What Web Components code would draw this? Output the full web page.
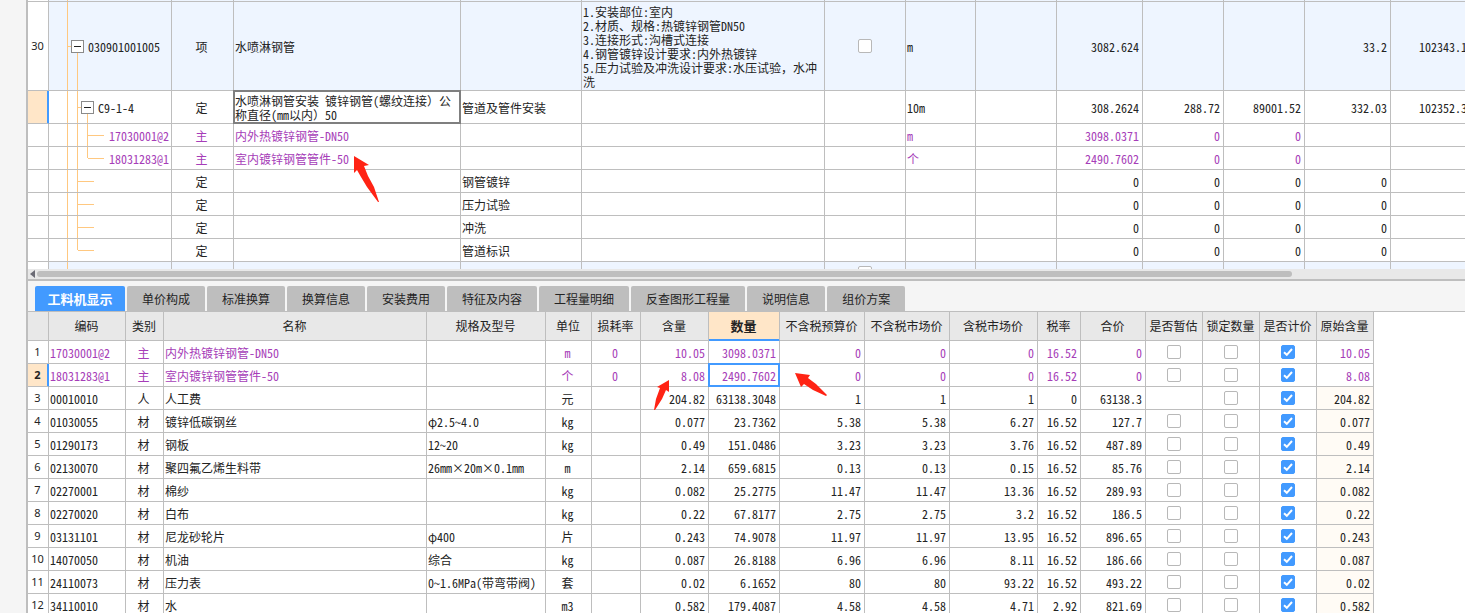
<!DOCTYPE html>
<html lang="zh-CN">
<head>
<meta charset="utf-8">
<title>工料机显示</title>
<style>
html, body { height: 100%; margin: 0; }
body {
  background: #f5f5f5; color: #232323; overflow: hidden;
  font: 12px/14px "Noto Sans CJK SC", sans-serif;
  font-feature-settings: "hwid" 1;
  --line: #bebebe; --blue: #429aff; --purple: #a63db8; --peach: #ffe6c8; --tree: #ffc880;
}
</style>
</head>
<body>
<cost-page></cost-page>
<script>
const tpl = html => { const t = document.createElement('template'); t.innerHTML = html; return t; };
const mount = (el, html) => {
  const root = el.attachShadow({ mode: 'open' });
  root.append(tpl(html).content.cloneNode(true));
  return root;
};
/* Chinese punctuation keeps its full width; letters and digits are half width. */
const wide = s => s.replace(/[，）]/g, '<span class="fw">$&</span>');

/* Rules shared by both grids. */
const gridCss = `
  table { border-collapse: separate; border-spacing: 0; table-layout: fixed; background: #fff; }
  td, th { box-sizing: border-box; padding: 2px 3px 0 1px; font-weight: 400; text-align: left;
    border-right: 1px solid var(--line); border-bottom: 1px solid var(--line);
    vertical-align: middle; overflow: hidden; position: relative; height: 23px; }
  tr.mat { color: var(--purple); }
  td.c { text-align: center; }
  td.r { text-align: right; white-space: nowrap; }
  th.no { padding: 0 1px 0 0; text-align: center; color: #232323; font: 11px/14px "Noto Sans", sans-serif; background: #fff; }
  th.no.on { background: var(--peach); font-weight: 700; box-shadow: inset -1px 0 var(--blue); border-right-color: var(--blue); }
  td.sel { overflow: visible; }
  td.sel::after { content: ""; position: absolute; inset: -1px; border: 2px solid var(--ring); pointer-events: none; }
  td.k { padding: 0; text-align: center; }
  .fw { font-feature-settings: normal; }
`;

/* A small tick box. */
customElements.define('tick-box', class extends HTMLElement {
  constructor() {
    super();
    const root = mount(this, `<style>
      :host { display: flex; justify-content: center; }
      input { appearance: none; box-sizing: border-box; width: 14px; height: 14px; margin: 0;
        border: 1px solid #b8b8b8; border-radius: 2px; background: #fff; }
      input:checked { border-color: var(--blue); background: var(--blue)
        url("data:image/svg+xml,%3Csvg xmlns='http://www.w3.org/2000/svg' viewBox='0 0 12 12'%3E%3Cpath d='M2 6.2l2.8 2.6L10 3' fill='none' stroke='white' stroke-width='2'/%3E%3C/svg%3E") center / 12px; }
    </style><input type="checkbox">`);
    const box = root.querySelector('input');
    box.checked = this.hasAttribute('checked');
    box.setAttribute('aria-label', this.getAttribute('label') || '');
  }
});

/* Connector lines, fold button and the slotted code of one tree row. */
customElements.define('tree-node', class extends HTMLElement {
  constructor() {
    super();
    const fold = this.hasAttribute('fold');
    const lines = (this.getAttribute('lines') || '').split(' ').filter(Boolean).map(s => {
      const [kind, x] = s.split(':');
      const y = { full: ['0', '100%'], upper: ['0', '50%'], lower: ['50%', '100%'] }[kind];
      return y ? `<line x1="${x}" x2="${x}" y1="${y[0]}" y2="${y[1]}"/>`
               : `<line x1="${x}" x2="${+x + 16}" y1="50%" y2="50%"/>`;
    }).join('');
    mount(this, `<style>
      :host { display: flex; align-items: center; gap: 4px; white-space: nowrap; }
      svg { position: absolute; inset: 0; width: 100%; height: 100%; }
      line { stroke: var(--tree); stroke-width: 1; shape-rendering: crispEdges; }
      :host([level="1"]) { padding-left: 22px; }
      :host([level="2"]) { padding-left: 32px; }
      :host([level="3"]) { padding-left: 60px; }
      button { position: relative; box-sizing: border-box; width: 13px; height: 13px; padding: 0;
        border: 1px solid #8a8a8a; background: #fff; display: grid; place-items: center; }
      button::before { content: ""; width: 7px; height: 1px; background: #232323; }
      .text { position: relative; padding-top: 2px; }
    </style><svg aria-hidden="true">${lines}</svg>${fold ? '<button type="button" aria-label="折叠"></button>' : ''}${
      this.hasAttribute('level') ? '<span class="text"><slot></slot></span>' : ''}`);
  }
});

/* Upper pane: the bill of quantities. */
customElements.define('bill-grid', class extends HTMLElement {
  constructor() {
    super();
    const widths = [21, 123, 62, 227, 121, 243, 81, 70, 81, 86, 81, 81, 86, 80];
    const zero = (part, lines) => ({ h: 23, tree: `<tree-node lines="${lines}"></tree-node>`,
      cells: ['定', '', part, '', '', '', '', '0', '0', '0', '0', ''] });
    const rows = [
      { h: 2, cls: 'bill', tree: '<tree-node lines="full:18.5"></tree-node>', cells: Array(12).fill('') },
      { h: 89, no: '30', cls: 'bill',
        tree: '<tree-node level="1" fold lines="full:18.5 lower:28.5 stub:18.5">030901001005</tree-node>',
        cells: ['项', '水喷淋钢管', '', '1.安装部位:室内<br>2.材质、规格:热镀锌钢管DN50<br>3.连接形式:沟槽式连接<br>4.钢管镀锌设计要求:内外热镀锌<br>5.压力试验及冲洗设计要求:水压试验，水冲洗',
          '<tick-box label="水喷淋钢管"></tick-box>', 'm', '', '3082.624', '', '', '33.2', '102343.1'] },
      { h: 33, on: 1, tree: '<tree-node level="2" fold lines="full:18.5 full:28.5 lower:38.5 stub:28.5">C9-1-4</tree-node>',
        cells: ['定', '水喷淋钢管安装 镀锌钢管(螺纹连接）公称直径(mm以内）50', '管道及管件安装', '', '', '10m', '', '308.2624', '288.72', '89001.52', '332.03', '102352.3'] },
      { h: 23, cls: 'mat', tree: '<tree-node level="3" lines="full:18.5 full:28.5 full:38.5 stub:38.5">17030001@2</tree-node>',
        cells: ['主', '内外热镀锌钢管-DN50', '', '', '', 'm', '', '3098.0371', '0', '0', '', ''] },
      { h: 23, cls: 'mat', tree: '<tree-node level="3" lines="full:18.5 full:28.5 upper:38.5 stub:38.5">18031283@1</tree-node>',
        cells: ['主', '室内镀锌钢管管件-50', '', '', '', '个', '', '2490.7602', '0', '0', '', ''] },
      zero('钢管镀锌', 'full:18.5 full:28.5 stub:28.5'),
      zero('压力试验', 'full:18.5 full:28.5 stub:28.5'),
      zero('冲洗', 'full:18.5 full:28.5 stub:28.5'),
      zero('管道标识', 'full:18.5 upper:28.5 stub:28.5'),
      { h: 23, cls: 'bill', tree: '<tree-node lines="full:18.5"></tree-node>', cells: ['项', '', '', '', '<tick-box label="下一项"></tick-box>', '', '', '', '', '', '', ''] }
    ];
    const kinds = ['c', '', '', '', 'k', '', '', 'r', 'r', 'r', 'r', 'r'];
    mount(this, `<style>${gridCss}
      :host { display: block; border-left: 2px solid var(--line); border-bottom: 2px solid var(--line); }
      .view { height: 269px; overflow: hidden; }
      table { width: max(100%, 1443px); }
      tr.bill td { background: #eef5ff; }
      tr.thin > * { height: 2px; padding: 0; line-height: 0; font-size: 0; }
      td.t { padding: 0; }
      td.sel { --ring: #7f7f7f; }
      .bar { display: flex; align-items: center; height: 10px; padding-left: 2px; gap: 2px; background: #e8e8e8; }
      .bar svg { width: 5px; height: 8px; }
      .thumb { width: calc(100% - 180px); height: 6px; border-radius: 3px; background: var(--line); }
    </style>
    <div class="view"><table>
      <colgroup>${widths.map(w => `<col style="width:${w}px">`).join('')}</colgroup>
      <tbody>${rows.map(r => `<tr class="${r.cls || ''}${r.h < 9 ? ' thin' : ''}" style="height:${r.h}px">
        <th scope="row" class="no${r.on ? ' on' : ''}">${r.no || ''}</th><td class="t">${r.tree}</td>${
        r.cells.map((c, i) => `<td class="${kinds[i]}${r.on && i === 1 ? ' sel' : ''}">${wide(c)}</td>`).join('')}</tr>`).join('')}
      </tbody></table></div>
    <div class="bar"><svg viewBox="0 0 5 8"><path d="M5 0v8L0 4z" fill="#6b6b75"/></svg><div class="thumb"></div></div>`);
  }
});

/* Tab strip over the lower pane. */
customElements.define('tab-strip', class extends HTMLElement {
  constructor() {
    super();
    const names = ['工料机显示', '单价构成', '标准换算', '换算信息', '安装费用', '特征及内容', '工程量明细', '反查图形工程量', '说明信息', '组价方案'];
    mount(this, `<style>
      :host { display: block; padding: 5px 0 0 7px; border-left: 2px solid var(--line); border-bottom: 1px solid var(--line); }
      div { display: flex; gap: 2px; }
      button { box-sizing: border-box; height: 25px; padding: 0 15px; border: 0; border-radius: 2px 2px 0 0;
        background: var(--line); color: #232323; font: inherit; white-space: nowrap; }
      button.on { background: var(--blue); color: #fff; font-weight: 700; font-size: 13px; padding: 0 12px; min-width: 90px; }
    </style><div role="tablist">${names.map((n, i) =>
      `<button type="button" role="tab" aria-selected="${!i}"${i ? '' : ' class="on"'}>${n}</button>`).join('')}</div>`);
  }
});

/* Lower pane: labour, material and machine rows. */
customElements.define('resource-grid', class extends HTMLElement {
  constructor() {
    super();
    const widths = [21, 77, 38, 263, 119, 46, 49, 68, 71, 85, 85, 88, 43, 65, 57, 57, 57, 57];
    const heads = ['', '编码', '类别', '名称', '规格及型号', '单位', '损耗率', '含量', '数量', '不含税预算价', '不含税市场价', '含税市场价', '税率', '合价', '是否暂估', '锁定数量', '是否计价', '原始含量'];
    const kinds = ['', 'c', '', '', 'c', 'c', 'r', 'r', 'r', 'r', 'r', 'r', 'r'];
    const data = [
      '17030001@2|主|内外热镀锌钢管-DN50||m|0|10.05|3098.0371|0|0|0|16.52|0',
      '18031283@1|主|室内镀锌钢管管件-50||个|0|8.08|2490.7602|0|0|0|16.52|0',
      '00010010|人|人工费||元||204.82|63138.3048|1|1|1|0|63138.3',
      '01030055|材|镀锌低碳钢丝|φ2.5~4.0|kg||0.077|23.7362|5.38|5.38|6.27|16.52|127.7',
      '01290173|材|钢板|12~20|kg||0.49|151.0486|3.23|3.23|3.76|16.52|487.89',
      '02130070|材|聚四氟乙烯生料带|26mm×20m×0.1mm|m||2.14|659.6815|0.13|0.13|0.15|16.52|85.76',
      '02270001|材|棉纱||kg||0.082|25.2775|11.47|11.47|13.36|16.52|289.93',
      '02270020|材|白布||kg||0.22|67.8177|2.75|2.75|3.2|16.52|186.5',
      '03131101|材|尼龙砂轮片|φ400|片||0.243|74.9078|11.97|11.97|13.95|16.52|896.65',
      '14070050|材|机油|综合|kg||0.087|26.8188|6.96|6.96|8.11|16.52|186.66',
      '24110073|材|压力表|0~1.6MPa(带弯带阀)|套||0.02|6.1652|80|80|93.22|16.52|493.22',
      '34110010|材|水||m3||0.582|179.4087|4.58|4.58|4.71|2.92|821.69'
    ].map(s => s.split('|'));
    const tick = (name, head, on) => `<td class="k"><tick-box label="${name} ${head}"${on ? ' checked' : ''}></tick-box></td>`;
    mount(this, `<style>${gridCss}
      :host { display: block; border-left: 2px solid var(--line); background: #fff; }
      table { width: 1346px; }
      thead th { height: 29px; padding: 0 1px 0 0; text-align: center; white-space: nowrap; background: #e8e8e8; }
      thead th.on { background: var(--peach); font-weight: 700; font-size: 13px; border-bottom-color: var(--blue); box-shadow: inset 0 -1px var(--blue); }
      td.sel { --ring: var(--blue); }
      td.own { background: #fffbf5; }
      td { white-space: nowrap; }
    </style>
    <table>
      <colgroup>${widths.map(w => `<col style="width:${w}px">`).join('')}</colgroup>
      <thead><tr>${heads.map(h => `<th scope="col"${h === '数量' ? ' class="on"' : ''}>${h}</th>`).join('')}</tr></thead>
      <tbody>${data.map((r, n) => `<tr${n < 2 ? ' class="mat"' : ''}>
        <th scope="row" class="no${n === 1 ? ' on' : ''}">${n + 1}</th>${
        r.map((c, i) => `<td class="${kinds[i]}${n === 1 && i === 7 ? ' sel' : ''}">${c}</td>`).join('')}${
        n === 2 ? '<td></td>' : tick(r[2], '是否暂估')}${tick(r[2], '锁定数量')}${tick(r[2], '是否计价', 1)}
        <td class="r${n > 1 ? ' own' : ''}">${r[6]}</td></tr>`).join('')}</tbody>
    </table>`);
  }
});

/* A red annotation arrow laid over the grids. */
customElements.define('mark-arrow', class extends HTMLElement {
  constructor() {
    super();
    mount(this, `<style>
      :host { position: absolute; pointer-events: none; }
      svg { display: block; width: 100%; height: 100%; }
    </style><svg aria-hidden="true"><polygon points="${this.getAttribute('shape')}" fill="#ff2314"/></svg>`);
  }
});

customElements.define('cost-page', class extends HTMLElement {
  constructor() {
    super();
    mount(this, `<style>
      :host { position: relative; display: flex; flex-direction: column; height: 100%; overflow: hidden; padding-left: 26px; box-sizing: border-box; }
      resource-grid { flex: 1; }
      .a { left: 353px; top: 156px; width: 28px; height: 48px; }
      .b { left: 653px; top: 379px; width: 18px; height: 32px; }
      .c { left: 794px; top: 372px; width: 35px; height: 26px; }
    </style>
    <bill-grid></bill-grid>
    <tab-strip></tab-strip>
    <resource-grid></resource-grid>
    <mark-arrow class="a" shape="1,0 16,9 11,10 15,20 21,31 26,46 25,46 14,31 8,21 4,14 1,17"></mark-arrow>
    <mark-arrow class="b" shape="16,1 16,13 13,11 9,20 2,31 1,31 3,20 7,9 4,8"></mark-arrow>
    <mark-arrow class="c" shape="1,1 16,3 14,6 22,12 33,23 32,24 19,18 10,12 7,15"></mark-arrow>`);
  }
});
</script>
</body>
</html>
